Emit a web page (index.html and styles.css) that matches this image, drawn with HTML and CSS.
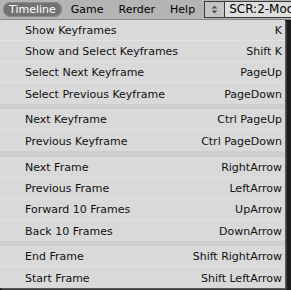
FILE: index.html
```html
<!DOCTYPE html>
<html>
<head>
<meta charset="utf-8">
<link rel="stylesheet" href="styles.css">
</head>
<body>
<div class="header">
  <div class="menus">
    <span class="mi active">Timeline</span>
    <span class="mi">Game</span>
    <span class="mi">Rerder</span>
    <span class="mi">Help</span>
  </div>
  <div class="browse">
    <svg width="9" height="9" viewBox="0 0 9 9"><path d="M1.5 3.5 L4.5 0.5 L7.5 3.5 Z M1.5 5.5 L4.5 8.5 L7.5 5.5 Z" fill="#555"/></svg>
  </div>
  <div class="field">SCR:2-Model</div>
</div>
<div class="stage">
  <div class="menu">
    <div class="row"><span>Show Keyframes</span><span>K</span></div>
    <div class="row"><span>Show and Select Keyframes</span><span>Shift K</span></div>
    <div class="row"><span>Select Next Keyframe</span><span>PageUp</span></div>
    <div class="row last"><span>Select Previous Keyframe</span><span>PageDown</span></div>
    <div class="sep"></div>
    <div class="row"><span>Next Keyframe</span><span>Ctrl PageUp</span></div>
    <div class="row last"><span>Previous Keyframe</span><span>Ctrl PageDown</span></div>
    <div class="sep wide"></div>
    <div class="row"><span>Next Frame</span><span>RightArrow</span></div>
    <div class="row"><span>Previous Frame</span><span>LeftArrow</span></div>
    <div class="row"><span>Forward 10 Frames</span><span>UpArrow</span></div>
    <div class="row last"><span>Back 10 Frames</span><span>DownArrow</span></div>
    <div class="sep"></div>
    <div class="row"><span>End Frame</span><span>Shift RightArrow</span></div>
    <div class="row last"><span>Start Frame</span><span>Shift LeftArrow</span></div>
  </div>
</div>
</body>
</html>
```
FILE: styles.css
```css
html, body {
  margin: 0;
  padding: 0;
  width: 291px;
  height: 290px;
  overflow: hidden;
  background: #1c1c1c;
  font-family: "DejaVu Sans", sans-serif;
  font-size: 11px;
}
.header {
  height: 20px;
  background: #b4b4b4;
  display: flex;
  align-items: center;
  box-sizing: border-box;
  border-bottom: 1px solid #8a8a8a;
  white-space: nowrap;
  overflow: hidden;
}
.menus {
  display: flex;
  align-items: center;
  padding-left: 3px;
  gap: 3px;
}
.mi {
  height: 15px;
  line-height: 15px;
  padding: 0 6px;
  color: #000;
  border-radius: 8px;
}
.mi.active {
  background: #727272;
  color: #fff;
  box-shadow: inset 0 0 0 1px #8a8a8a;
}
.browse {
  margin-left: 3px;
  width: 21px;
  height: 17px;
  box-sizing: border-box;
  border: 1px solid #3a3a3a;
  background: #c4c4c4;
  display: flex;
  align-items: center;
  justify-content: center;
  flex: none;
}
.field {
  height: 17px;
  line-height: 15px;
  box-sizing: border-box;
  border: 1px solid #3a3a3a;
  border-left: none;
  background: #dedede;
  color: #000;
  padding-left: 4px;
  font-size: 12px;
  flex: none;
  width: 80px;
}
.menu {
  width: 285px;
  background: #d9d9d9;
  box-shadow: 1px 1px 0 #5a5a5a, 2px 2px 0 #3a3a3a;
  display: flex;
  flex-direction: column;
}
.row {
  flex: none;
  height: 21px;
  box-sizing: border-box;
  border-bottom: 1px solid #e2e2e2;
  display: flex;
  justify-content: space-between;
  align-items: center;
  padding: 2px 3px 0 25px;
  line-height: 18px;
  color: #111;
}
.row.last {
  border-bottom: none;
  padding-top: 3px;
}
.sep {
  flex: none;
  height: 5px;
  background: #cecece;
}
.sep.wide {
  height: 6px;
}
```
